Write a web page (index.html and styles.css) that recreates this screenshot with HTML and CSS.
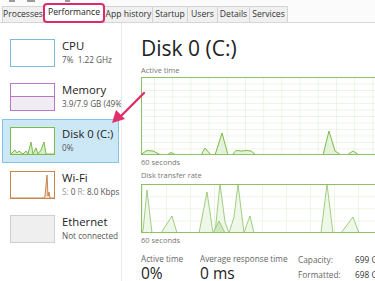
FILE: index.html
```html
<!DOCTYPE html>
<html>
<head>
<meta charset="utf-8">
<link rel="stylesheet" href="styles.css">
</head>
<body>
<div class="window">
  <div class="topstrip"><span class="mark m1"></span><span class="mark m2"></span><span class="mark m3"></span></div>
  <div class="tabs">
    <div class="tab t1">Processes</div>
    <div class="tab active">Performance</div>
    <div class="tab t3">App history</div>
    <div class="tab t4">Startup</div>
    <div class="tab t5">Users</div>
    <div class="tab t6">Details</div>
    <div class="tab t7">Services</div>
  </div>
  <div class="main">
    <div class="sidebar">
      <div class="item">
        <div class="thumb cpu"><svg width="45" height="28" viewBox="0 0 45 28"><polyline points="0,26.5 45,26.5" fill="none" stroke="#4a9fd0" stroke-width="1" stroke-dasharray="1,1"/></svg></div>
        <div class="info"><div class="name">CPU</div><div class="sub">7%&nbsp; 1.22 GHz</div></div>
      </div>
      <div class="item">
        <div class="thumb mem"><div class="memfill"></div></div>
        <div class="info"><div class="name">Memory</div><div class="sub">3.9/7.9 GB (49%)</div></div>
      </div>
      <div class="item selected">
        <div class="thumb disk"><svg width="43" height="26" viewBox="0 0 43 26"><polyline points="0,26 4,22 6,25 8,23 12,26 15,23 17,26 20,14 22,26 25,20 27,26 30,22 33,14 35,26 38,26 43,26" fill="#d8eec8" stroke="#7cba4a" stroke-width="1"/></svg></div>
        <div class="info"><div class="name">Disk 0 (C:)</div><div class="sub">0%</div></div>
      </div>
      <div class="item">
        <div class="thumb wifi"><svg width="43" height="26" viewBox="0 0 43 26"><polyline points="0,26 33,26 34,24 36,3 37,24 38,20 39,26 43,26" fill="#f3dcc8" stroke="#c8844a" stroke-width="1"/></svg></div>
        <div class="info"><div class="name">Wi-Fi</div><div class="sub"><span class="lt">S:</span> 0 <span class="lt">R:</span> 8.0 Kbps</div></div>
      </div>
      <div class="item">
        <div class="thumb eth"></div>
        <div class="info"><div class="name">Ethernet</div><div class="sub">Not connected</div></div>
      </div>
    </div>
    <div class="content">
      <div class="title">Disk 0 (C:)</div>
      <div class="label first">Active time</div>
      <div class="chart c1">
        <svg width="250" height="78" viewBox="0 0 250 78">
          <defs>
            <pattern id="g1" width="18.2" height="6.5" patternUnits="userSpaceOnUse" x="13" y="0">
              <path d="M0 0V6.5M0 0H18.2" fill="none" stroke="#dcebd0" stroke-width="1"/>
            </pattern>
          </defs>
          <rect x="0" y="0" width="250" height="78" fill="url(#g1)"/>
          <polyline points="0,78 2,76 6,73.5 12,74 18,77 22,78 26,78 30,75.5 35,78 60,78 64,71 70,78 74,78 81,56 87,78 91,78 95,73.5 101,74 106,73.5 110,74 115,78 182,78 188,54 194,74 200,78 206,78 212,74 218,78 250,78" fill="#e4f3da" stroke="#7cba4a" stroke-width="1"/>
          <rect x="0.5" y="0.5" width="249" height="77" fill="none" stroke="#8cc264" stroke-width="1"/>
        </svg>
      </div>
      <div class="label secs">60 seconds</div>
      <div class="label">Disk transfer rate</div>
      <div class="chart c2">
        <svg width="250" height="49" viewBox="0 0 250 49">
          <defs>
            <pattern id="g2" width="24" height="12.2" patternUnits="userSpaceOnUse" x="1" y="0">
              <path d="M0 0V12.2M0 0H24" fill="none" stroke="#dcebd0" stroke-width="1"/>
            </pattern>
          </defs>
          <rect x="0" y="0" width="250" height="49" fill="url(#g2)"/>
          <polyline points="0,49 2,47 6,6 11,49 20,49 31,32 36,49 58,49 66,8 72,49 74,49 79,0 84,38 88,49 93,33 97,0 103,49 106,40 109,32 113,49 180,49 186,0 192,49 200,49 212,33 218,49 250,49" fill="#eef7e8" stroke="#8cc264" stroke-width="0.8"/>
          <polyline points="72,49 78,37 84,49" fill="#cfe8bd" stroke="#8cc264" stroke-width="0.8"/>
          <rect x="0.5" y="0.5" width="249" height="48" fill="none" stroke="#8cc264" stroke-width="1"/>
        </svg>
      </div>
      <div class="label secs">60 seconds</div>
      <div class="stats">
        <div class="stat s1"><div class="slabel">Active time</div><div class="sval">0%</div></div>
        <div class="stat s2"><div class="slabel">Average response time</div><div class="sval">0 ms</div></div>
        <div class="props">
          <div class="prow"><span class="pk">Capacity:</span><span class="pv">699 GB</span></div>
          <div class="prow"><span class="pk">Formatted:</span><span class="pv">698 GB</span></div>
        </div>
      </div>
    </div>
  </div>
  <svg class="arrow" width="60" height="60" viewBox="0 0 60 60">
    <line x1="34" y1="3" x2="9" y2="28" stroke="#e0306a" stroke-width="2.4" stroke-linecap="round"/>
    <polygon points="2,33 6,20 15,29" fill="#e0306a"/>
  </svg>
</div>
</body>
</html>
```
FILE: styles.css
```css
html, body {
  margin: 0;
  padding: 0;
  background: #fff;
  overflow: hidden;
}
.window {
  position: relative;
  width: 375px;
  height: 281px;
  overflow: hidden;
  font-family: "Open Sans", "Noto Sans", sans-serif;
  color: #222;
}
.topstrip {
  height: 6px;
  position: relative;
  background: #fbfbfb;
}
.mark {
  position: absolute;
  top: 0;
  height: 2px;
  background: #9a9a9a;
}
.m1 { left: 9px; width: 6px; }
.m2 { left: 27px; width: 8px; }
.m3 { left: 65px; width: 5px; }
.tabs {
  display: flex;
  height: 16px;
  padding-left: 2px;
  background: #fbfbfb;
  border-bottom: 1px solid #d6d6d6;
  align-items: flex-end;
}
.tab {
  height: 16px;
  box-sizing: border-box;
  font-size: 8.6px;
  line-height: 15px;
  text-align: center;
  color: #333;
  background: #f0f0f0;
  border: 1px solid #d4d4d4;
  border-bottom: none;
  margin-right: -1px;
  white-space: nowrap;
  flex-shrink: 0;
}
.t1 { width: 42px; }
.t3 { width: 49px; }
.t4 { width: 36px; }
.t5 { width: 31px; }
.t6 { width: 33px; }
.t7 { width: 39px; }
.tab.active {
  position: relative;
  z-index: 2;
  width: 62px;
  height: 20px;
  margin-bottom: -1px;
  margin-top: -4px;
  background: #fff;
  border: 2px solid #dc2a6a;
  border-radius: 4px;
  line-height: 15px;
  color: #222;
}
.main {
  display: flex;
  height: 258px;
}
.sidebar {
  width: 122px;
  border-right: 1px solid #ececec;
  padding-top: 8px;
  box-sizing: border-box;
  flex-shrink: 0;
  overflow: hidden;
}
.item {
  display: flex;
  align-items: flex-start;
  gap: 7px;
  height: 44px;
  box-sizing: border-box;
  margin: 0 2px;
  padding: 7px 0 0 7px;
  border: 1px solid transparent;
}
.item.selected {
  background: #cce8f6;
  border-color: #86c4e6;
}
.thumb {
  width: 45px;
  height: 28px;
  box-sizing: border-box;
  border: 1px solid #ccc;
  background: #fff;
  flex-shrink: 0;
  overflow: hidden;
  position: relative;
}
.thumb svg { display: block; }
.thumb.cpu { border-color: #7fbadb; }
.thumb.mem { border-color: #b47bc4; }
.memfill {
  position: absolute;
  left: 0; right: 0; bottom: 0;
  height: 13px;
  background: #f1ecf2;
  border-top: 1px solid #b47bc4;
}
.thumb.disk { border-color: #7cba4a; }
.thumb.wifi { border-color: #c8844a; }
.thumb.eth { border-color: #cfcfcf; background: #efefef; }
.info { margin-top: -1px; min-width: 0; }
.name {
  font-size: 11.3px;
  line-height: 15px;
  color: #222;
  white-space: nowrap;
}
.sub {
  font-size: 8.2px;
  line-height: 13px;
  color: #555;
  white-space: nowrap;
}
.lt { color: #999; }
.content {
  padding-left: 19px;
  padding-top: 11px;
  flex: 1;
  min-width: 0;
}
.title {
  font-size: 21px;
  line-height: 28px;
  color: #222;
  white-space: nowrap;
}
.label {
  font-size: 7.5px;
  line-height: 11px;
  color: #777;
  white-space: nowrap;
}
.label.first { margin-top: 3px; margin-bottom: 1px; }
.secs { margin-top: 2px; margin-bottom: 2px; }
.chart svg { display: block; }
.c2 { margin-top: 3px; }
.stats {
  display: flex;
  margin-top: 6px;
}
.stat { flex-shrink: 0; }
.s1 { width: 59px; }
.s2 { width: 98px; }
.slabel {
  font-size: 8.2px;
  line-height: 13px;
  color: #666;
  white-space: nowrap;
}
.sval {
  font-size: 15.5px;
  line-height: 17px;
  color: #222;
  white-space: nowrap;
}
.props { font-size: 8.3px; color: #666; }
.prow { display: flex; line-height: 15px; white-space: nowrap; }
.pk { width: 57px; }
.pv { color: #333; }
.arrow {
  position: absolute;
  left: 110px;
  top: 90px;
}
```
